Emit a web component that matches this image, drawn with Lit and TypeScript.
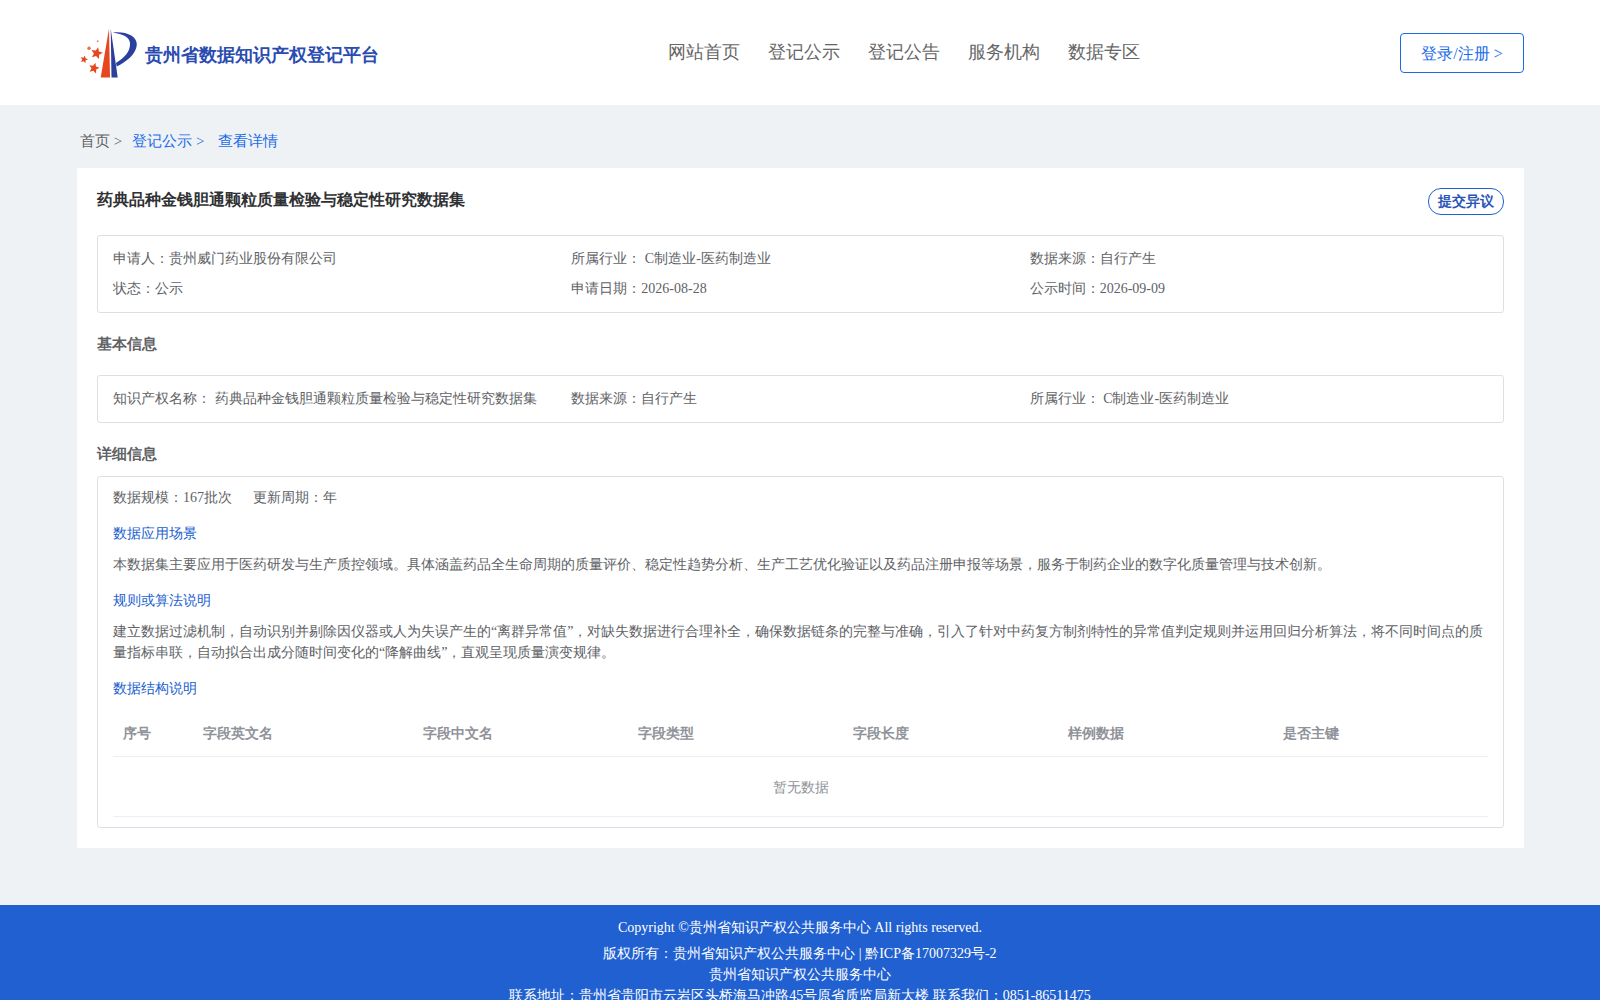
import { css, html, LitElement } from "lit";
import { customElement } from "lit/decorators.js";

const fields = ["序号", "字段英文名", "字段中文名", "字段类型", "字段长度", "样例数据", "是否主键"];

// five-point star as a polygon points string
function star(cx: number, cy: number, r: number) {
  const pts: string[] = [];
  for (let i = 0; i < 10; i++) {
    const rad = i % 2 === 0 ? r : r * 0.45;
    const a = -Math.PI / 2 + 0.25 + (i * Math.PI) / 5;
    pts.push(`${(cx + rad * Math.cos(a)).toFixed(2)},${(cy + rad * Math.sin(a)).toFixed(2)}`);
  }
  return pts.join(" ");
}

@customElement("app-root")
export class AppRoot extends LitElement {
  private logo() {
    return html`<svg class="logo" viewBox="0 0 58 50" width="58" height="50" aria-hidden="true">
      <path d="M29 0.500 L20.700 49.500 L30 49.500 Z" fill="#e8461e" />
      <path d="M30.700 0.500 L31.500 49.500 L37.700 49.500 Z" fill="#2a3f9e" />
      <path d="M32.700 4.500 C46 3 57 8 56.800 16.500 C56.500 26 46 34 36.700 38.500 L36 35 C44 30 50.500 24 50 15 C49.500 9 43 6 32.700 4.500 Z" fill="#2a3f9e" />
      <polygon points=${star(16.7, 25.2, 6.2)} fill="#e8461e" />
      <polygon points=${star(4, 31.5, 4)} fill="#e8461e" />
      <polygon points=${star(14, 40.2, 5.6)} fill="#e8461e" />
      <circle cx="9" cy="20.200" r="1.700" fill="#e8703e" />
      <circle cx="17.700" cy="13.200" r="1" fill="#ee8a60" />
    </svg>`;
  }

  render() {
    return html`
      <header class="header">
        <div class="brand">
          ${this.logo()}
          <span class="brand-name">贵州省数据知识产权登记平台</span>
        </div>
        <nav class="nav">
          <a>网站首页</a><a>登记公示</a><a>登记公告</a><a>服务机构</a><a>数据专区</a>
        </nav>
        <button class="login">登录/注册 &gt;</button>
      </header>

      <main class="main">
        <div class="crumbs">
          <span>首页 &gt;</span>
          <a class="c2">登记公示 &gt;</a>
          <a class="c3">查看详情</a>
        </div>

        <section class="card">
          <div class="title-row">
            <h1>药典品种金钱胆通颗粒质量检验与稳定性研究数据集</h1>
            <button class="objection">提交异议</button>
          </div>

          <div class="box info">
            <div>申请人：贵州威门药业股份有限公司</div>
            <div>所属行业： C制造业-医药制造业</div>
            <div>数据来源：自行产生</div>
            <div>状态：公示</div>
            <div>申请日期：2026-08-28</div>
            <div>公示时间：2026-09-09</div>
          </div>

          <h2 class="basic-title">基本信息</h2>
          <div class="box info">
            <div>知识产权名称： 药典品种金钱胆通颗粒质量检验与稳定性研究数据集</div>
            <div>数据来源：自行产生</div>
            <div>所属行业： C制造业-医药制造业</div>
          </div>

          <h2 class="detail-title">详细信息</h2>
          <div class="box detail">
            <div class="scale"><span>数据规模：167批次</span><span>更新周期：年</span></div>
            <h3>数据应用场景</h3>
            <p>本数据集主要应用于医药研发与生产质控领域。具体涵盖药品全生命周期的质量评价、稳定性趋势分析、生产工艺优化验证以及药品注册申报等场景，服务于制药企业的数字化质量管理与技术创新。</p>
            <h3>规则或算法说明</h3>
            <p>建立数据过滤机制，自动识别并剔除因仪器或人为失误产生的“离群异常值”，对缺失数据进行合理补全，确保数据链条的完整与准确，引入了针对中药复方制剂特性的异常值判定规则并运用回归分析算法，将不同时间点的质量指标串联，自动拟合出成分随时间变化的“降解曲线”，直观呈现质量演变规律。</p>
            <h3>数据结构说明</h3>
            <table>
              <colgroup>
                <col class="c-no" /><col class="c-en" /><col /><col /><col /><col /><col />
              </colgroup>
              <thead>
                <tr>${fields.map((f) => html`<th>${f}</th>`)}</tr>
              </thead>
              <tbody>
                <tr><td colspan="7">暂无数据</td></tr>
              </tbody>
            </table>
          </div>
        </section>
      </main>

      <footer class="footer">
        <div class="copy">Copyright ©贵州省知识产权公共服务中心 All rights reserved.</div>
        <div>版权所有：贵州省知识产权公共服务中心 | 黔ICP备17007329号-2</div>
        <div>贵州省知识产权公共服务中心</div>
        <div>联系地址：贵州省贵阳市云岩区头桥海马冲路45号原省质监局新大楼 联系我们：0851-86511475</div>
      </footer>
    `;
  }

  static styles = css`
    :host {
      display: block;
      background: #eff2f5;
      color: #606266;
      font-family: "Liberation Serif", serif;
      font-size: 14px;
    }

    * {
      box-sizing: border-box;
    }

    .header {
      height: 105px;
      background: #fff;
      display: flex;
      align-items: center;
      padding: 0 76px 0 77px;
    }

    .brand {
      width: 591px;
      display: flex;
      align-items: center;
      gap: 7px;
      padding: 4px 0 0 3px;
    }

    .logo {
      flex: none;
      margin-top: -4px;
    }

    .brand-name {
      font-size: 18px;
      font-weight: 700;
      color: #2a4bb0;
    }

    .nav {
      display: flex;
      gap: 28px;
      padding-bottom: 2px;
      font-size: 18px;
      color: #666;
    }

    .login {
      margin-left: auto;
      width: 124px;
      height: 40px;
      padding: 4px 0 0;
      background: #fff;
      border: 1px solid #1a6be8;
      border-radius: 4px;
      color: #1a6be8;
      font: inherit;
      font-size: 16px;
    }

    .main {
      padding: 0 76px 57px 77px;
    }

    .crumbs {
      height: 63px;
      padding: 26px 0 0 3px;
      font-size: 15px;
      line-height: 20px;
      display: flex;
    }

    .crumbs a {
      color: #1a6be8;
    }

    .c2 {
      margin-left: 10px;
    }

    .c3 {
      margin-left: 14px;
    }

    .card {
      background: #fff;
      padding: 20px;
    }

    .title-row {
      display: flex;
      justify-content: space-between;
      align-items: flex-start;
      height: 47px;
    }

    h1 {
      margin: 0;
      font-size: 16px;
      font-weight: 700;
      line-height: 24px;
      color: #303133;
    }

    .objection {
      width: 76px;
      height: 27px;
      padding: 0;
      background: #fff;
      border: 1px solid #2060d0;
      border-radius: 13px;
      color: #2a55b8;
      font: inherit;
      font-size: 14px;
      font-weight: 700;
    }

    .box {
      border: 1px solid #dcdfe6;
      border-radius: 3px;
      padding: 0 15px;
    }

    .info {
      display: grid;
      grid-template-columns: repeat(3, 1fr);
      grid-auto-rows: 30px;
      align-items: center;
      padding-top: 8px;
      padding-bottom: 8px;
    }

    h2 {
      margin: 0;
      font-size: 15px;
      font-weight: 700;
      line-height: 20px;
      color: #606266;
    }

    .basic-title {
      margin: 21px 0 21px;
    }

    .detail-title {
      margin: 21px 0 12px;
    }

    .detail {
      padding-top: 11px;
      padding-bottom: 10px;
    }

    .scale {
      display: flex;
      gap: 21px;
      line-height: 20px;
    }

    h3 {
      margin: 16px 0 0;
      font-size: 14px;
      font-weight: 400;
      line-height: 20px;
      color: #2060d0;
    }

    p {
      margin: 10px 0 0;
      line-height: 21px;
    }

    table {
      width: 100%;
      margin-top: 10px;
      border-collapse: collapse;
      table-layout: fixed;
    }

    .c-no {
      width: 80px;
    }

    .c-en {
      width: 220px;
    }

    th {
      height: 47px;
      padding: 3px 10px 0;
      text-align: left;
      font-weight: 700;
      color: #909399;
      border-bottom: 1px solid #ebeef5;
    }

    td {
      height: 60px;
      padding-top: 4px;
      text-align: center;
      color: #909399;
      border-bottom: 1px solid #ebeef5;
    }

    .footer {
      background: #2060d0;
      color: #fff;
      text-align: center;
      line-height: 21px;
      padding-top: 12px;
      padding-bottom: 8px;
    }

    .copy {
      margin-bottom: 5px;
    }
  `;
}
